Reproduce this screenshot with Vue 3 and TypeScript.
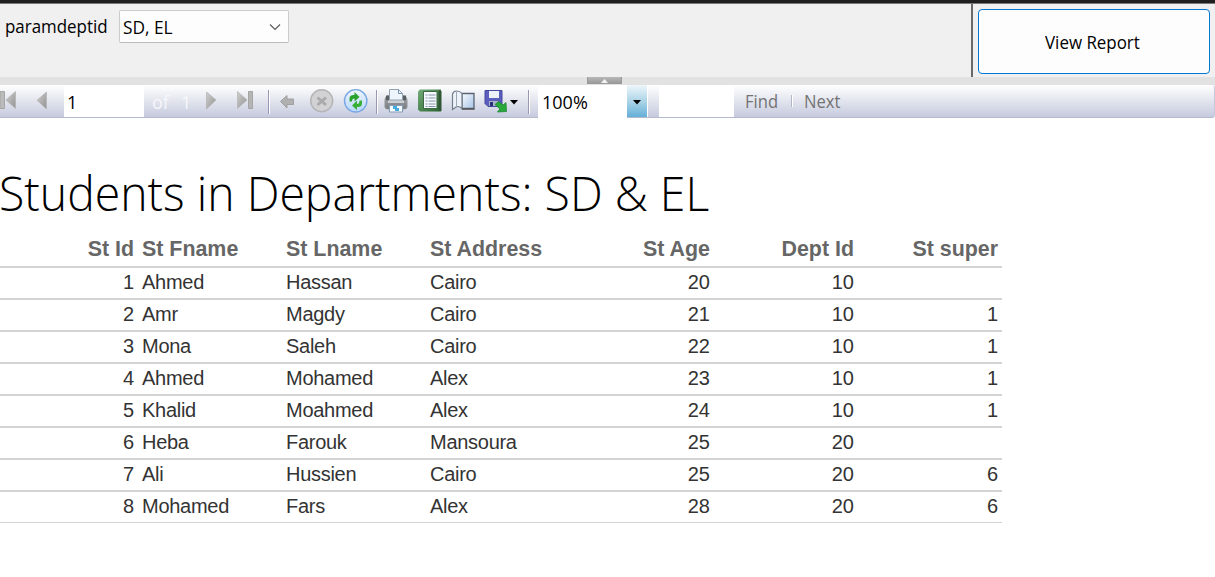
<script setup lang="ts">
interface Student {
  id: number
  first: string
  last: string
  address: string
  age: number
  dept: number
  supervisor?: number
}

const students: Student[] = [
  { id: 1, first: 'Ahmed', last: 'Hassan', address: 'Cairo', age: 20, dept: 10 },
  { id: 2, first: 'Amr', last: 'Magdy', address: 'Cairo', age: 21, dept: 10, supervisor: 1 },
  { id: 3, first: 'Mona', last: 'Saleh', address: 'Cairo', age: 22, dept: 10, supervisor: 1 },
  { id: 4, first: 'Ahmed', last: 'Mohamed', address: 'Alex', age: 23, dept: 10, supervisor: 1 },
  { id: 5, first: 'Khalid', last: 'Moahmed', address: 'Alex', age: 24, dept: 10, supervisor: 1 },
  { id: 6, first: 'Heba', last: 'Farouk', address: 'Mansoura', age: 25, dept: 20 },
  { id: 7, first: 'Ali', last: 'Hussien', address: 'Cairo', age: 25, dept: 20, supervisor: 6 },
  { id: 8, first: 'Mohamed', last: 'Fars', address: 'Alex', age: 28, dept: 20, supervisor: 6 },
]
</script>

<template>
  <div class="viewer">
    <header class="params">
      <label class="param-name"><span>paramdeptid</span></label>
      <div class="select">
        <span class="select-text">SD, EL</span>
        <svg width="12" height="8" viewBox="0 0 12 8"><path d="M1 1.5 6 6.5 11 1.5" fill="none" stroke="#5c5c5c" stroke-width="1.2" /></svg>
      </div>
      <div class="action">
        <button class="view"><span>View Report</span></button>
      </div>
    </header>
    <div class="splitter">
      <div class="grip"><svg width="7" height="4" viewBox="0 0 7 4"><path d="M0 4 3.5 0 7 4z" fill="#f4f4f4" /></svg></div>
    </div>

    <div class="toolbar">
      <svg width="64" height="32" viewBox="0 85 64 32">
        <defs>
          <linearGradient id="gray" x1="0" y1="0" x2="1" y2="1"><stop offset="0" stop-color="#cfcfcf" /><stop offset="1" stop-color="#929292" /></linearGradient>
        </defs>
        <path d="M0 91.5h4.5v17H0z" fill="#bbb" stroke="#a5a5a5" />
        <path d="M15.5 91.5v17L6 100z" fill="url(#gray)" stroke="#b3b3b3" stroke-width=".7" />
        <path d="M46.5 92v17L37 100.3z" fill="url(#gray)" stroke="#b3b3b3" stroke-width=".7" />
      </svg>
      <div class="page-box"><span>1</span></div>
      <div class="page-total"><span>of</span><span>1</span></div>
      <svg width="68" height="32" viewBox="200 85 68 32">
        <path d="M206.5 92v17L216 100z" fill="url(#gray)" stroke="#b3b3b3" stroke-width=".7" />
        <path d="M237.5 91.5v17L247 100z" fill="url(#gray)" stroke="#b3b3b3" stroke-width=".7" />
        <path d="M248.500 91.5h4v17h-4z" fill="#b5b5b5" stroke="#a5a5a5" />
      </svg>
      <i class="sep"></i>
      <svg width="106" height="32" viewBox="270 85 106 32">
        <defs>
          <linearGradient id="blue" x1="0" y1="0" x2="0" y2="1"><stop offset="0" stop-color="#edf5fd" /><stop offset="1" stop-color="#b9d8fb" /></linearGradient>
        </defs>
        <path d="M280.5 101.500 287 95.500V99h6.500v5.500H287v3.500z" fill="#b0b0b0" stroke="#a0a0a0" />
        <circle cx="321.700" cy="100.800" r="11" fill="#d2d2d4" stroke="#b5b5b7" stroke-width="1.500" />
        <path d="m317.500 97.500 8.500 7.500m0-7.500-8.500 7.500" stroke="#aaa" stroke-width="3" />
        <circle cx="355.700" cy="100.800" r="11.200" fill="url(#blue)" stroke="#79a7e2" stroke-width="1.400" />
        <path d="M349.500 101.500v-3q0-3.500 4-3.500h1v-3l5 5-5 4.500V98.500q-2.500 0-2.500 3z" fill="#2aa22b" />
        <path d="M362 100.500v3q0 3.500-4 3.500h-1v3l-5-4.500 5-5v3.500q2.500 0 2.500-3.500z" fill="#38af35" />
      </svg>
      <i class="sep"></i>
      <svg width="150" height="32" viewBox="378 85 150 32">
        <defs>
          <linearGradient id="metal" x1="0" y1="0" x2="0" y2="1"><stop offset="0" stop-color="#d5d7d9" /><stop offset=".5" stop-color="#8e9194" /><stop offset="1" stop-color="#777a7e" /></linearGradient>
          <linearGradient id="green" x1="0" y1="0" x2="1" y2="1"><stop offset="0" stop-color="#72ad78" /><stop offset="1" stop-color="#2a632e" /></linearGradient>
          <linearGradient id="cover" x1="0" y1="0" x2="1" y2="1"><stop offset="0" stop-color="#f9fcff" /><stop offset="1" stop-color="#a6c2e7" /></linearGradient>
        </defs>
        <path d="M387 96h17q3 1 3 4v7q0 2-3 2h-16q-3 0-3-2v-7q0-3 2-4z" fill="url(#metal)" stroke="#909396" />
        <path d="M389.500 89.500h9l4 4v6.500h-13z" fill="#eef5fc" stroke="#94a1b2" />
        <path d="M398.500 89.500v4h4" fill="none" stroke="#7590ae" />
        <path d="M386 95.500h3v5h-3zM403 95.500h3v5h-3z" fill="#5b5e61" />
        <path d="M388 100.500h16v2.500h-16z" fill="#cbd0d4" />
        <path d="M389.500 105.500h13v6.500h-13z" fill="#f5faff" stroke="#849bb5" />
        <path d="M393 106h4v2h2v3h-4v-2h-2z" fill="#46a9df" />

        <path d="M420 89.500h21v22h-21l-2-2v-18z" fill="url(#green)" />
        <path d="m438.500 90 3 1v20l-3-1z" fill="#315636" />
        <path d="M423.500 91.500h13.500v17h-13.500z" fill="#f6f9fd" stroke="#3d6745" />
        <path d="M425.500 95h2m1 0h7m-10 3h2m1 0h7m-10 3h2m1 0h7m-10 3h2m1 0h7m-10 2.500h2m1 0h7" stroke="#8294ab" />

        <path d="M462 93.500h12v15h-12z" fill="url(#cover)" stroke="#5b6471" stroke-width="1.300" />
        <path d="M452.500 94q1-3 4-3 3.500 0 5.500 2.500v15q-3-3-6-1.500l-3.500 2.500z" fill="#eef3f9" stroke="#747f8e" stroke-width="1.200" />
        <path d="M456.500 91.500V107" stroke="#9da8b6" />
        <path d="M462 109h12.500" stroke="#555" stroke-width="1.500" />

        <path d="M485 90.500h17v16h-14l-3-3z" fill="#5b5ebc" stroke="#4548a0" />
        <path d="M489 91h10v7h-10z" fill="#edf1fa" />
        <path d="M489 101h9v5h-9z" fill="#aab3c8" />
        <path d="M490 102h3v4h-3z" fill="#2b2e78" />
        <path d="m495 104.500 3.500-3 4.500 3.500 3-2.500.5 9-9 .5 2.500-3z" fill="#28a83a" stroke="#12802a" stroke-width=".7" />
        <path d="M510 100h8l-4 4.500z" fill="#000" />
      </svg>
      <i class="sep"></i>
      <div class="zoom-box"><span>100%</span></div>
      <div class="zoom-drop"><svg width="8" height="5" viewBox="0 0 8 5"><path d="M0 0h8L4 4.500z" /></svg></div>
      <div class="find-box"></div>
      <div class="find"><span>Find</span></div>
      <i class="thin"></i>
      <div class="next"><span>Next</span></div>
    </div>

    <main>
      <h1><span>Students in Departments: SD &amp; EL</span></h1>
      <table>
        <thead>
          <tr>
            <th class="num id">St Id</th><th>St Fname</th><th>St Lname</th><th>St Address</th>
            <th class="num">St Age</th><th class="num">Dept Id</th><th class="num">St super</th>
          </tr>
        </thead>
        <tbody>
          <tr v-for="s in students" :key="s.id">
            <td class="num">{{ s.id }}</td><td>{{ s.first }}</td><td>{{ s.last }}</td><td>{{ s.address }}</td>
            <td class="num">{{ s.age }}</td><td class="num">{{ s.dept }}</td><td class="num">{{ s.supervisor }}</td>
          </tr>
        </tbody>
      </table>
    </main>
  </div>
</template>

<style>
body { margin: 0; background: #fff; }
</style>

<style scoped>
.viewer { width: 1215px; height: 577px; overflow: hidden; background: #fff; color: #000; font: 18px/24px "Open Sans", "Noto Sans", sans-serif; }
.viewer * { box-sizing: border-box; }
svg { display: block; flex: none; }
span { display: inline-block; white-space: nowrap; transform-origin: 0 50%; }
.params { height: 77px; display: flex; align-items: flex-start; background: #f0f0f0; border-top: 3px solid #1f1f1f; box-shadow: inset 0 1px #777; }
.param-name { width: 114px; padding: 11px 0 0 5px; }
.param-name span { transform: scaleX(.94); }
.select { width: 170px; height: 33px; margin: 7px 0 0 5px; padding: 0 7px 0 3px; display: flex; align-items: center; justify-content: space-between; background: #fdfdfd; border: 1px solid #ccc; border-bottom-color: #bbb; border-radius: 2px; }
.select-text { transform: scaleX(.96); }
.action { margin: 1px 0 0 auto; width: 244px; height: 73px; border-left: 2px solid #696969; padding: 5px 5px 3px 5px; }
.view { display: flex; align-items: center; justify-content: center; width: 232px; height: 65px; padding: 0 3px 0 0; color: #000; font: inherit; background: #fdfdfd; border: 1px solid #0078d4; border-radius: 4px; }
.view span { transform: scaleX(.94); transform-origin: 50% 50%; }
.splitter { height: 8px; background: #e2e2e2; padding-left: 587px; }
.grip { width: 35px; height: 7px; display: flex; justify-content: center; padding-top: 2px; background: linear-gradient(#b8b8b8, #9b9b9b); border: 1px solid #999; border-top: 0; }
.toolbar { height: 33px; display: flex; align-items: flex-start; background: linear-gradient(#fff, #e2e5ee 50%, #c6cade); border-bottom: 1px solid #b4b9cc; border-right: 1px solid #c6cade; border-radius: 0 3px 3px 0; }
.page-box { width: 80px; height: 32px; background: #fff; padding: 5px 0 0 3px; }
.page-total { width: 56px; height: 32px; display: flex; padding: 5px 0 0 8px; gap: 12px; color: #f6f7fa; }
.sep { flex: none; width: 2px; height: 24px; margin-top: 5px; background: #9897b5; border-right: 1px solid #fff; }
.zoom-box { flex: none; width: 89px; height: 33px; margin-left: 8px; padding: 5px 0 0 4px; background: #fff; }
.zoom-drop { width: 21px; height: 32px; padding: 15px 0 0 6px; background: linear-gradient(#eef7fb, #add5e8 50%, #65afd7); border-right: 1px solid #fff; }
.find-box { width: 75px; height: 32px; margin-left: 11px; background: #fff; }
.find, .next { padding-top: 4px; color: #737373; }
.find { width: 57px; padding-left: 11px; }
.thin { width: 2px; height: 12px; margin-top: 10px; background: #b5b6c5; border-right: 1px solid #fff; }
.next { padding-left: 11px; }
.find span, .next span { transform: scaleX(.92); }
main { padding-top: 39px; }
h1 { height: 73px; margin: 0; font: 300 48px/72px "Open Sans", "Noto Sans", sans-serif; }
h1 span { transform: translateX(-1px) scaleX(.966); }
table { width: 1002px; table-layout: fixed; border-collapse: separate; border-spacing: 0; font: 20px/24px "Liberation Sans", Arial, sans-serif; color: #333; }
th, td { height: 32px; padding: 0 4px 3px; text-align: left; white-space: nowrap; border-bottom: 2px solid #d3d3d3; }
td:not(.num) { letter-spacing: -.28px; }
th { width: 144px; height: 38px; padding: 1px 4px 0; font-size: 21.400px; color: #666; }
th.id { width: 138px; }
.num { text-align: right; }
tbody tr:last-child td { height: 31px; border-bottom-width: 1px; }
</style>
